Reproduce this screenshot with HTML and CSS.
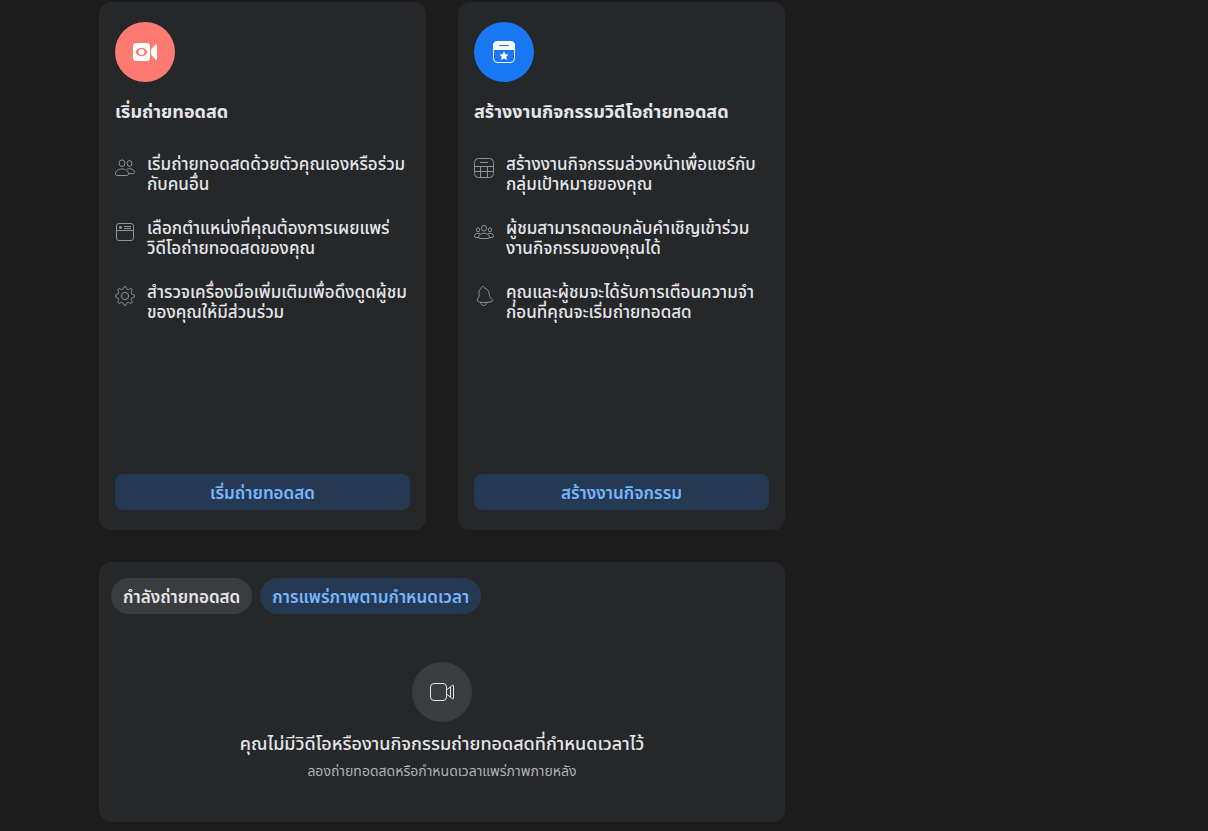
FILE: index.html
```html
<!DOCTYPE html>
<html lang="th">
<head>
<meta charset="utf-8">
<meta name="viewport" content="width=device-width, initial-scale=1">
<title>ถ่ายทอดสด</title>
<link rel="stylesheet" href="styles.css">
</head>
<body>
<main class="page">
  <div class="options">
    <section class="card option">
      <div class="badge badge-live">
        <svg width="28" height="28" viewBox="0 0 28 28" aria-hidden="true">
          <rect x="2" y="5" width="17" height="18" rx="3.5" fill="#fff"/>
          <path d="M20 12.2v3.6c0 .6.2 1.100.600 1.500l3.600 3.900c.8.900 1.800.600 1.800-.700V7.500c0-1.300-1-1.600-1.800-.7l-3.600 3.900c-.4.400-.6.900-.6 1.500z" fill="#fff"/>
          <path d="M4.500 14c1.200-2.800 3.400-4.200 6-4.200s4.800 1.400 6 4.200c-1.200 2.800-3.400 4.200-6 4.200s-4.800-1.400-6-4.200z" fill="#ff7b72"/>
          <circle cx="10.500" cy="14" r="3" fill="#fff"/>
        </svg>
      </div>
      <h2 class="option-title">เริ่มถ่ายทอดสด</h2>
      <ul class="features">
        <li class="feature">
          <svg class="icon" viewBox="0 0 20 20" aria-hidden="true">
            <ellipse cx="7" cy="5.200" rx="2.900" ry="3.300"/>
            <ellipse cx="14.500" cy="5.500" rx="2.400" ry="2.900"/>
            <path d="M2 17.500h10c.9 0 1.500-.6 1.500-1.500 0-3.200-3-5-6.500-5S.5 12.800.5 16c0 .9.600 1.500 1.500 1.500z"/>
            <path d="M12 11.200c.8-.3 1.700-.5 2.700-.5 2.800 0 4.800 1.600 4.800 3.900 0 .7-.5 1.100-1.200 1.100h-4.800"/>
          </svg>
          <span>เริ่มถ่ายทอดสดด้วยตัวคุณเองหรือร่วมกับคนอื่น</span>
        </li>
        <li class="feature">
          <svg class="icon" viewBox="0 0 20 20" aria-hidden="true">
            <rect x="1.500" y="1.500" width="17" height="17" rx="2.500"/>
            <path d="M1.500 8.500h17M9 4.500h7M9 6.500h7"/>
            <circle class="dot" cx="5.500" cy="5.500" r="1.500"/>
          </svg>
          <span>เลือกตำแหน่งที่คุณต้องการเผยแพร่วิดีโอถ่ายทอดสดของคุณ</span>
        </li>
        <li class="feature">
          <svg class="icon" viewBox="0 0 20 20" aria-hidden="true">
            <circle cx="10" cy="10" r="3.600"/>
            <path d="M8.400 2.200Q8.600.500 10 .5t1.600 1.700q.1 1 1.100 1.300.9.300 1.700-.4 1.300-1.100 2.300-.1t-.1 2.300q-.7.800-.3 1.700.4 1 1.400 1.200 1.800.2 1.800 1.800t-1.800 1.800q-1 .1-1.400 1.100-.4.900.3 1.700 1.100 1.300.1 2.300t-2.300-.1q-.8-.7-1.700-.3-1 .4-1.100 1.400-.2 1.600-1.600 1.600t-1.600-1.600q-.1-1-1.100-1.400-.9-.4-1.700.3-1.300 1.100-2.300.1t.1-2.300q.7-.8.300-1.700-.4-1-1.400-1.100Q.5 11.600.5 10t1.800-1.800q1-.2 1.400-1.200.4-.9-.3-1.700-1.100-1.300-.1-2.300t2.300.1q.8.700 1.700.4 1-.3 1.100-1.300z"/>
          </svg>
          <span>สำรวจเครื่องมือเพิ่มเติมเพื่อดึงดูดผู้ชมของคุณให้มีส่วนร่วม</span>
        </li>
      </ul>
      <button class="button" type="button">เริ่มถ่ายทอดสด</button>
    </section>

    <section class="card option">
      <div class="badge badge-event">
        <svg width="28" height="28" viewBox="0 0 28 28" aria-hidden="true">
          <rect x="3.500" y="3.500" width="21" height="21" rx="4" fill="none" stroke="#fff"/>
          <path d="M3 12V7.500A4.500 4.500 0 0 1 7.500 3h13A4.500 4.500 0 0 1 25 7.500V12z" fill="#fff"/>
          <path d="M9.500 7.500h9" stroke="#1877f2" stroke-linecap="round"/>
          <path d="M14 13.200l1.400 3 3.200.4-2.300 2.200.6 3.300-2.900-1.600-2.900 1.600.6-3.300-2.300-2.200 3.200-.4z" fill="#fff"/>
        </svg>
      </div>
      <h2 class="option-title">สร้างงานกิจกรรมวิดีโอถ่ายทอดสด</h2>
      <ul class="features">
        <li class="feature">
          <svg class="icon" viewBox="0 0 20 20" aria-hidden="true">
            <rect x=".5" y=".5" width="19" height="19" rx="4"/>
            <path d="M.5 8.500h19M.5 13.500h19M6.500 8.500v11M13.500 8.500v11M6 4.500h8"/>
          </svg>
          <span>สร้างงานกิจกรรมล่วงหน้าเพื่อแชร์กับกลุ่มเป้าหมายของคุณ</span>
        </li>
        <li class="feature">
          <svg class="icon" viewBox="0 0 20 20" aria-hidden="true">
            <ellipse cx="10" cy="6.200" rx="2.500" ry="2.900"/>
            <ellipse cx="4" cy="7.800" rx="1.700" ry="1.900"/>
            <ellipse cx="16" cy="7.800" rx="1.700" ry="1.900"/>
            <path d="M6 16.500h8c.8 0 1.300-.5 1.300-1.200 0-2.600-2.300-4.100-5.300-4.100s-5.300 1.500-5.300 4.100c0 .7.500 1.200 1.300 1.200z"/>
            <path d="M4.700 15.500H1.600c-.7 0-1.100-.4-1.100-1 0-2 1.500-3.200 3.500-3.200.8 0 1.400.2 2 .5M15.300 15.500h3.100c.7 0 1.100-.4 1.100-1 0-2-1.500-3.200-3.500-3.200-.8 0-1.400.2-2 .5"/>
          </svg>
          <span>ผู้ชมสามารถตอบกลับคำเชิญเข้าร่วมงานกิจกรรมของคุณได้</span>
        </li>
        <li class="feature">
          <svg class="icon" viewBox="0 0 20 20" aria-hidden="true">
            <path d="M7.300 2.300C7.200 1.200 8 .500 9 .500s1.800.7 1.700 1.700c2.800.8 4.500 3.100 4.600 6 .1 2.100.8 3.200 2 4.300 1.500 1.300 1.700 2.600.4 3-2.500.7-4.900 1.100-7.700 1-2.500 0-4.200-.3-5.900-.9-1.100-.5-1-2.100.1-3.500 1-1.300 1-2.500.8-4.300-.3-2.500.5-4.500 2.300-5.500z"/>
            <path d="M6.700 16.400c.1 1.900 1.200 3.100 2.900 3.100s2.800-1.200 2.900-3.100"/>
          </svg>
          <span>คุณและผู้ชมจะได้รับการเตือนความจำก่อนที่คุณจะเริ่มถ่ายทอดสด</span>
        </li>
      </ul>
      <button class="button" type="button">สร้างงานกิจกรรม</button>
    </section>
  </div>

  <section class="card broadcasts">
    <div class="tabs">
      <button class="tab" type="button">กำลังถ่ายทอดสด</button>
      <button class="tab tab-active" type="button">การแพร่ภาพตามกำหนดเวลา</button>
    </div>
    <div class="empty">
      <div class="badge badge-empty">
        <svg width="28" height="28" viewBox="0 0 28 28" fill="none" stroke="#e4e6eb" aria-hidden="true">
          <rect x="2.500" y="5.500" width="16" height="17" rx="3.500"/>
          <path d="M18.500 12l5.800-4.600c.8-.6 1.200-.4 1.200.5v12.200c0 .9-.4 1.100-1.200.5L18.500 16M22.500 9v10"/>
        </svg>
      </div>
      <p class="empty-title">คุณไม่มีวิดีโอหรืองานกิจกรรมถ่ายทอดสดที่กำหนดเวลาไว้</p>
      <p class="empty-note">ลองถ่ายทอดสดหรือกำหนดเวลาแพร่ภาพภายหลัง</p>
    </div>
  </section>
</main>
</body>
</html>
```
FILE: styles.css
```css
* {
  box-sizing: border-box;
}

body {
  margin: 0;
  background: #1c1c1d;
  color: #e4e6eb;
  font-family: "Noto Sans Thai", "Open Sans", sans-serif;
  font-size: 17px;
  font-weight: 500;
  line-height: 20px;
}

h2,
p,
ul {
  margin: 0;
  padding: 0;
}

.page {
  display: grid;
  gap: 32px;
  max-width: 686px;
  margin-left: 99px;
  padding: 2px 0 9px;
}

.options {
  display: grid;
  grid-template-columns: 1fr 1fr;
  gap: 32px;
}

.card {
  background: #252728;
  border-radius: 12px;
}

.option {
  display: flex;
  flex-direction: column;
  min-height: 528px;
  padding: 20px 16px;
}

.badge {
  display: flex;
  align-items: center;
  justify-content: center;
  width: 60px;
  height: 60px;
  border-radius: 50%;
}

.badge-live {
  background: #ff7b72;
}

.badge-event {
  background: #1877f2;
}

.badge-empty {
  background: #3b3c3e;
}

.option-title {
  margin: 21px 0 32px;
  font-size: 18px;
  font-weight: 700;
}

.features {
  display: grid;
  gap: 24px;
  list-style: none;
}

.feature {
  display: flex;
  gap: 12px;
}

.icon {
  flex: none;
  width: 20px;
  height: 20px;
  margin-top: 3px;
  fill: none;
  stroke: #8c939d;
}

.dot {
  fill: #8c939d;
  stroke: none;
}

.button,
.tab {
  height: 36px;
  border: 0;
  font: inherit;
  font-size: 17px;
  font-weight: 600;
  cursor: pointer;
}

.button {
  margin-top: auto;
  padding: 4px 12px 0;
  border-radius: 8px;
  background: #253a52;
  color: #75b6ff;
}

.tab {
  padding: 4px 12px 0;
  border-radius: 18px;
  background: #3b3c3e;
  color: #e4e6eb;
}

.tab-active {
  background: #253a52;
  color: #75b6ff;
}

.broadcasts {
  padding: 16px 12px 40px;
}

.tabs {
  display: flex;
  flex-wrap: wrap;
  gap: 8px;
}

.empty {
  display: flex;
  flex-direction: column;
  align-items: center;
  margin-top: 48px;
  text-align: center;
}

.empty-title {
  margin-top: 13px;
  font-size: 18px;
}

.empty-note {
  margin-top: 7px;
  color: #b0b3b8;
  font-size: 14px;
  font-weight: 400;
}
```
